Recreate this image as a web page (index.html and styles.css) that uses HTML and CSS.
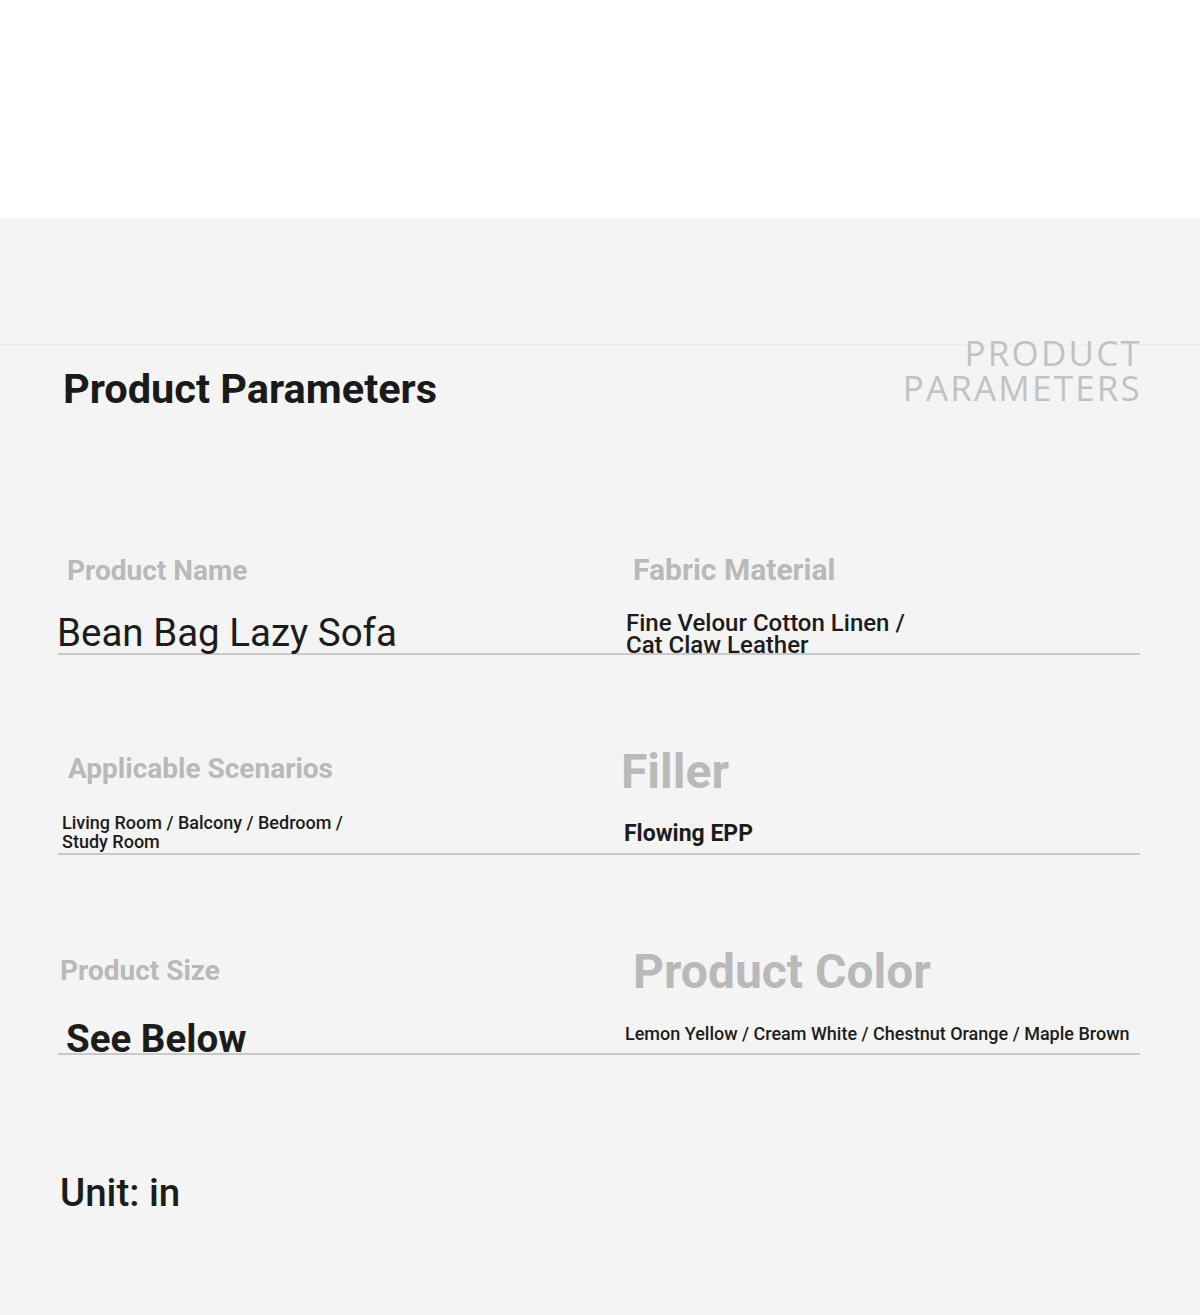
FILE: index.html
```html
<!DOCTYPE html>
<html lang="en">
<head>
<meta charset="utf-8">
<title>Product Parameters</title>
<link rel="stylesheet" href="styles.css">
</head>
<body>
<div class="top"></div>
<section class="panel">
  <header class="head">
    <h1 class="title">Product Parameters</h1>
    <div class="en">PRODUCT<br>PARAMETERS</div>
  </header>
  <div class="grid">
    <div class="cell">
      <div class="label l-name">Product Name</div>
      <div class="value v-name">Bean Bag Lazy Sofa</div>
    </div>
    <div class="cell">
      <div class="label l-fabric">Fabric Material</div>
      <div class="value v-fabric">Fine Velour Cotton Linen /<br>Cat Claw Leather</div>
    </div>
    <div class="cell">
      <div class="label l-scen">Applicable Scenarios</div>
      <div class="value v-scen">Living Room / Balcony / Bedroom /<br>Study Room</div>
    </div>
    <div class="cell">
      <div class="label label-big l-filler">Filler</div>
      <div class="value v-filler">Flowing EPP</div>
    </div>
    <div class="cell">
      <div class="label l-size">Product Size</div>
      <div class="value v-size">See Below</div>
    </div>
    <div class="cell">
      <div class="label label-big l-color">Product Color</div>
      <div class="value v-color">Lemon Yellow / Cream White / Chestnut Orange / Maple Brown</div>
    </div>
  </div>
  <div class="unit">Unit: in</div>
</section>
</body>
</html>
```
FILE: styles.css
```css
* { box-sizing: border-box; }
html, body { margin: 0; padding: 0; }
body {
  font-family: Roboto, "Liberation Sans", Arial, sans-serif;
  background: #ffffff;
  color: #1c1c1c;
}
.top { height: 218px; background: #ffffff; }
.panel {
  height: 1097px;
  background: #f4f4f4;
  padding-top: 126px;
  overflow: hidden;
}
.head {
  border-top: 1px solid #ebebeb;
  display: flex;
  justify-content: space-between;
  align-items: flex-start;
  padding: 0 58px 0 63px;
}
.title {
  margin: 23px 0 0 0;
  font-size: 41.5px;
  line-height: 42px;
  font-weight: 700;
  color: #1a1a1a;
}
.en {
  margin-top: -10px;
  font-family: "Open Sans", "Noto Sans", sans-serif;
  font-weight: 400;
  font-size: 35px;
  line-height: 35px;
  letter-spacing: 2.2px;
  text-align: right;
  color: #c2c2c2;
}
.grid {
  margin: 95px 0 0 58px;
  display: grid;
  grid-template-columns: 542px 540px;
  row-gap: 50px;
}
.cell {
  height: 150px;
  display: flex;
  flex-direction: column;
  border-bottom: 2px solid #c9c9c9;
}
.label {
  font-weight: 700;
  font-size: 28px;
  line-height: 28px;
  color: #b9b9b9;
}
.label-big { font-size: 48px; line-height: 48px; }
.l-name { margin-top: 52px; padding-left: 9px; }
.l-fabric { margin-top: 50px; padding-left: 33px; font-size: 30px; line-height: 30px; }
.l-scen { margin-top: 50px; padding-left: 10px; }
.l-filler { margin-top: 43px; padding-left: 21px; }
.l-size { margin-top: 52px; padding-left: 2px; }
.l-color { margin-top: 43px; padding-left: 33px; }

.value { margin-top: auto; color: #1c1c1c; }
.v-name {
  font-size: 38.5px; line-height: 38px; font-weight: 400;
  padding-bottom: 1px; margin-left: -1px;
}
.v-fabric {
  font-size: 24px; line-height: 22px; font-weight: 500;
  padding-left: 26px; margin-bottom: -3px;
}
.v-scen {
  font-size: 18px; line-height: 19px; font-weight: 500;
  padding-left: 4px; padding-bottom: 2px;
}
.v-filler {
  font-size: 23px; line-height: 23px; font-weight: 700;
  padding-left: 24px; padding-bottom: 8px;
}
.v-size {
  font-size: 38.5px; line-height: 26px; font-weight: 700;
  padding-left: 8px; padding-bottom: 1px;
}
.v-color {
  font-size: 18px; line-height: 18px; font-weight: 500;
  padding-left: 25px; padding-bottom: 10px;
}
.unit {
  margin: 118px 0 0 60px;
  font-size: 38.5px;
  line-height: 39px;
  font-weight: 500;
  color: #1c1c1c;
}
```
